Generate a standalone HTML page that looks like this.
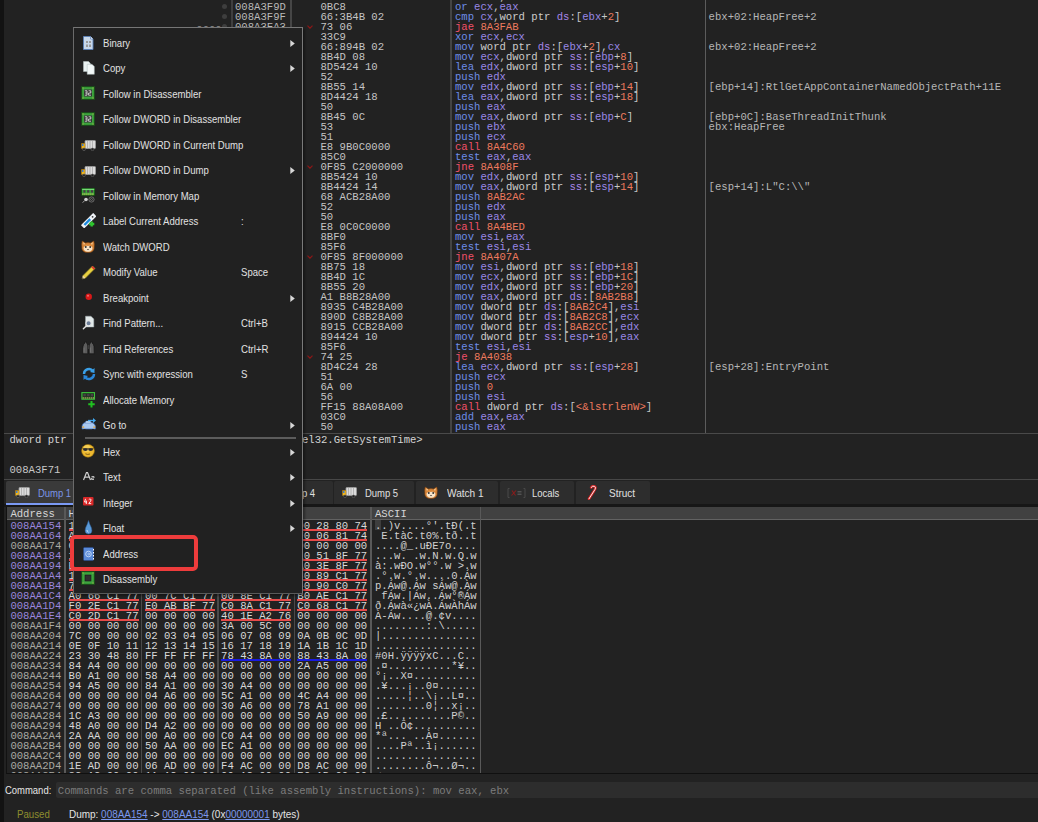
<!DOCTYPE html>
<html><head><meta charset="utf-8"><style>
html,body{margin:0;padding:0;}
body{width:1038px;height:822px;overflow:hidden;background:#222222;position:relative;}
div,svg{position:absolute;}
.m{font-family:"Liberation Mono",monospace;font-size:10.6px;line-height:10px;white-space:pre;height:10px;}
.s{font-family:"Liberation Sans",sans-serif;font-size:11px;line-height:11px;white-space:pre;transform-origin:0 0;}
</style></head><body>
<div style="left:0px;top:0px;width:4px;height:822px;background:#121212;"></div>
<div style="left:230.8px;top:0px;width:1.8px;height:433px;background:#3f3f3f;"></div>
<div style="left:290px;top:0px;width:2px;height:433px;background:#464646;"></div>
<div style="left:450px;top:0px;width:2px;height:433px;background:#444444;"></div>
<div style="left:704.8px;top:0px;width:1.5px;height:433px;background:#5c5c5c;"></div>
<div style="left:4px;top:433px;width:1034px;height:1px;background:#4a4a4a;"></div>
<div style="left:4px;top:0;width:1034px;height:433px;overflow:hidden">
<div class="m" style="left:451px;top:-7.83px"><span style="color:#6d8de8">shl</span> <span style="color:#9a88e6">ecx</span><span style="color:#c8c8c8">,</span><span style="color:#9a88e6">eax</span></div>
<div style="left:217.6px;top:3.8px;width:5.4px;height:5.4px;border-radius:50%;background:#3e3e3e"></div>
<div class="m" style="left:231px;top:2.17px"><span style="color:#b9b9b9">008A3F9D</span></div>
<div class="m" style="left:316.5px;top:2.17px"><span style="color:#c4c4c4">0BC8</span></div>
<div class="m" style="left:451px;top:2.17px"><span style="color:#6d8de8">or</span> <span style="color:#9a88e6">ecx</span><span style="color:#c8c8c8">,</span><span style="color:#9a88e6">eax</span></div>
<div style="left:217.6px;top:13.8px;width:5.4px;height:5.4px;border-radius:50%;background:#3e3e3e"></div>
<div class="m" style="left:231px;top:12.17px"><span style="color:#b9b9b9">008A3F9F</span></div>
<div class="m" style="left:316.5px;top:12.17px"><span style="color:#c4c4c4">66:3B4B 02</span></div>
<div class="m" style="left:451px;top:12.17px"><span style="color:#6d8de8">cmp</span> <span style="color:#9a88e6">cx</span><span style="color:#c8c8c8">,</span><span style="color:#cccccc">word</span> <span style="color:#cccccc">ptr</span> <span style="color:#a886e8">ds</span><span style="color:#c8c8c8">:</span><span style="color:#c8c8c8">[</span><span style="color:#9a88e6">ebx</span><span style="color:#c8c8c8">+</span><span style="color:#ee7a5e">2</span><span style="color:#c8c8c8">]</span></div>
<div class="m" style="left:704.6px;top:12.17px"><span style="color:#b6b6b6">ebx+02:HeapFree+2</span></div>
<div style="left:217.6px;top:23.8px;width:5.4px;height:5.4px;border-radius:50%;background:#3e3e3e"></div>
<div class="m" style="left:231px;top:22.17px"><span style="color:#b9b9b9">008A3FA3</span></div>
<div class="m" style="left:316.5px;top:22.17px"><span style="color:#c4c4c4">73 06</span></div>
<div class="m" style="left:451px;top:22.17px"><span style="color:#f0506a">jae</span> <span style="color:#ee7a5e">8A3FAB</span></div>
<svg style="position:absolute;left:302.5px;top:24.7px" width="6" height="4"><path d="M0.5 0.6 L3 3.2 L5.5 0.6" stroke="#8c1616" stroke-width="1.2" fill="none"/></svg>
<div style="left:217.6px;top:33.8px;width:5.4px;height:5.4px;border-radius:50%;background:#3e3e3e"></div>
<div class="m" style="left:231px;top:32.17px"><span style="color:#b9b9b9">008A3FA5</span></div>
<div class="m" style="left:316.5px;top:32.17px"><span style="color:#c4c4c4">33C9</span></div>
<div class="m" style="left:451px;top:32.17px"><span style="color:#6d8de8">xor</span> <span style="color:#9a88e6">ecx</span><span style="color:#c8c8c8">,</span><span style="color:#9a88e6">ecx</span></div>
<div class="m" style="left:316.5px;top:42.17px"><span style="color:#c4c4c4">66:894B 02</span></div>
<div class="m" style="left:451px;top:42.17px"><span style="color:#6d8de8">mov</span> <span style="color:#cccccc">word</span> <span style="color:#cccccc">ptr</span> <span style="color:#a886e8">ds</span><span style="color:#c8c8c8">:</span><span style="color:#c8c8c8">[</span><span style="color:#9a88e6">ebx</span><span style="color:#c8c8c8">+</span><span style="color:#ee7a5e">2</span><span style="color:#c8c8c8">]</span><span style="color:#c8c8c8">,</span><span style="color:#9a88e6">cx</span></div>
<div class="m" style="left:704.6px;top:42.17px"><span style="color:#b6b6b6">ebx+02:HeapFree+2</span></div>
<div class="m" style="left:316.5px;top:52.17px"><span style="color:#c4c4c4">8B4D 08</span></div>
<div class="m" style="left:451px;top:52.17px"><span style="color:#6d8de8">mov</span> <span style="color:#9a88e6">ecx</span><span style="color:#c8c8c8">,</span><span style="color:#cccccc">dword</span> <span style="color:#cccccc">ptr</span> <span style="color:#a886e8">ss</span><span style="color:#c8c8c8">:</span><span style="color:#c8c8c8">[</span><span style="color:#9a88e6">ebp</span><span style="color:#c8c8c8">+</span><span style="color:#ee7a5e">8</span><span style="color:#c8c8c8">]</span></div>
<div class="m" style="left:316.5px;top:62.17px"><span style="color:#c4c4c4">8D5424 10</span></div>
<div class="m" style="left:451px;top:62.17px"><span style="color:#6d8de8">lea</span> <span style="color:#9a88e6">edx</span><span style="color:#c8c8c8">,</span><span style="color:#cccccc">dword</span> <span style="color:#cccccc">ptr</span> <span style="color:#a886e8">ss</span><span style="color:#c8c8c8">:</span><span style="color:#c8c8c8">[</span><span style="color:#9a88e6">esp</span><span style="color:#c8c8c8">+</span><span style="color:#ee7a5e">10</span><span style="color:#c8c8c8">]</span></div>
<div class="m" style="left:316.5px;top:72.17px"><span style="color:#c4c4c4">52</span></div>
<div class="m" style="left:451px;top:72.17px"><span style="color:#6d8de8">push</span> <span style="color:#9a88e6">edx</span></div>
<div class="m" style="left:316.5px;top:82.17px"><span style="color:#c4c4c4">8B55 14</span></div>
<div class="m" style="left:451px;top:82.17px"><span style="color:#6d8de8">mov</span> <span style="color:#9a88e6">edx</span><span style="color:#c8c8c8">,</span><span style="color:#cccccc">dword</span> <span style="color:#cccccc">ptr</span> <span style="color:#a886e8">ss</span><span style="color:#c8c8c8">:</span><span style="color:#c8c8c8">[</span><span style="color:#9a88e6">ebp</span><span style="color:#c8c8c8">+</span><span style="color:#ee7a5e">14</span><span style="color:#c8c8c8">]</span></div>
<div class="m" style="left:704.6px;top:82.17px"><span style="color:#b6b6b6">[ebp+14]:RtlGetAppContainerNamedObjectPath+11E</span></div>
<div class="m" style="left:316.5px;top:92.17px"><span style="color:#c4c4c4">8D4424 18</span></div>
<div class="m" style="left:451px;top:92.17px"><span style="color:#6d8de8">lea</span> <span style="color:#9a88e6">eax</span><span style="color:#c8c8c8">,</span><span style="color:#cccccc">dword</span> <span style="color:#cccccc">ptr</span> <span style="color:#a886e8">ss</span><span style="color:#c8c8c8">:</span><span style="color:#c8c8c8">[</span><span style="color:#9a88e6">esp</span><span style="color:#c8c8c8">+</span><span style="color:#ee7a5e">18</span><span style="color:#c8c8c8">]</span></div>
<div class="m" style="left:316.5px;top:102.17px"><span style="color:#c4c4c4">50</span></div>
<div class="m" style="left:451px;top:102.17px"><span style="color:#6d8de8">push</span> <span style="color:#9a88e6">eax</span></div>
<div class="m" style="left:316.5px;top:112.17px"><span style="color:#c4c4c4">8B45 0C</span></div>
<div class="m" style="left:451px;top:112.17px"><span style="color:#6d8de8">mov</span> <span style="color:#9a88e6">eax</span><span style="color:#c8c8c8">,</span><span style="color:#cccccc">dword</span> <span style="color:#cccccc">ptr</span> <span style="color:#a886e8">ss</span><span style="color:#c8c8c8">:</span><span style="color:#c8c8c8">[</span><span style="color:#9a88e6">ebp</span><span style="color:#c8c8c8">+</span><span style="color:#ee7a5e">C</span><span style="color:#c8c8c8">]</span></div>
<div class="m" style="left:704.6px;top:112.17px"><span style="color:#b6b6b6">[ebp+0C]:BaseThreadInitThunk</span></div>
<div class="m" style="left:316.5px;top:122.17px"><span style="color:#c4c4c4">53</span></div>
<div class="m" style="left:451px;top:122.17px"><span style="color:#6d8de8">push</span> <span style="color:#9a88e6">ebx</span></div>
<div class="m" style="left:704.6px;top:122.17px"><span style="color:#b6b6b6">ebx:HeapFree</span></div>
<div class="m" style="left:316.5px;top:132.17px"><span style="color:#c4c4c4">51</span></div>
<div class="m" style="left:451px;top:132.17px"><span style="color:#6d8de8">push</span> <span style="color:#9a88e6">ecx</span></div>
<div class="m" style="left:316.5px;top:142.17px"><span style="color:#c4c4c4">E8 9B0C0000</span></div>
<div class="m" style="left:451px;top:142.17px"><span style="color:#f0506a">call</span> <span style="color:#ee7a5e">8A4C60</span></div>
<div class="m" style="left:316.5px;top:152.17px"><span style="color:#c4c4c4">85C0</span></div>
<div class="m" style="left:451px;top:152.17px"><span style="color:#6d8de8">test</span> <span style="color:#9a88e6">eax</span><span style="color:#c8c8c8">,</span><span style="color:#9a88e6">eax</span></div>
<div class="m" style="left:316.5px;top:162.17px"><span style="color:#c4c4c4">0F85 C2000000</span></div>
<div class="m" style="left:451px;top:162.17px"><span style="color:#f0506a">jne</span> <span style="color:#ee7a5e">8A408F</span></div>
<svg style="position:absolute;left:302.5px;top:164.7px" width="6" height="4"><path d="M0.5 0.6 L3 3.2 L5.5 0.6" stroke="#8c1616" stroke-width="1.2" fill="none"/></svg>
<div class="m" style="left:316.5px;top:172.17px"><span style="color:#c4c4c4">8B5424 10</span></div>
<div class="m" style="left:451px;top:172.17px"><span style="color:#6d8de8">mov</span> <span style="color:#9a88e6">edx</span><span style="color:#c8c8c8">,</span><span style="color:#cccccc">dword</span> <span style="color:#cccccc">ptr</span> <span style="color:#a886e8">ss</span><span style="color:#c8c8c8">:</span><span style="color:#c8c8c8">[</span><span style="color:#9a88e6">esp</span><span style="color:#c8c8c8">+</span><span style="color:#ee7a5e">10</span><span style="color:#c8c8c8">]</span></div>
<div class="m" style="left:316.5px;top:182.17px"><span style="color:#c4c4c4">8B4424 14</span></div>
<div class="m" style="left:451px;top:182.17px"><span style="color:#6d8de8">mov</span> <span style="color:#9a88e6">eax</span><span style="color:#c8c8c8">,</span><span style="color:#cccccc">dword</span> <span style="color:#cccccc">ptr</span> <span style="color:#a886e8">ss</span><span style="color:#c8c8c8">:</span><span style="color:#c8c8c8">[</span><span style="color:#9a88e6">esp</span><span style="color:#c8c8c8">+</span><span style="color:#ee7a5e">14</span><span style="color:#c8c8c8">]</span></div>
<div class="m" style="left:704.6px;top:182.17px"><span style="color:#b6b6b6">[esp+14]:L"C:\\"</span></div>
<div class="m" style="left:316.5px;top:192.17px"><span style="color:#c4c4c4">68 ACB28A00</span></div>
<div class="m" style="left:451px;top:192.17px"><span style="color:#6d8de8">push</span> <span style="color:#ee7a5e">8AB2AC</span></div>
<div class="m" style="left:316.5px;top:202.17px"><span style="color:#c4c4c4">52</span></div>
<div class="m" style="left:451px;top:202.17px"><span style="color:#6d8de8">push</span> <span style="color:#9a88e6">edx</span></div>
<div class="m" style="left:316.5px;top:212.17px"><span style="color:#c4c4c4">50</span></div>
<div class="m" style="left:451px;top:212.17px"><span style="color:#6d8de8">push</span> <span style="color:#9a88e6">eax</span></div>
<div class="m" style="left:316.5px;top:222.17px"><span style="color:#c4c4c4">E8 0C0C0000</span></div>
<div class="m" style="left:451px;top:222.17px"><span style="color:#f0506a">call</span> <span style="color:#ee7a5e">8A4BED</span></div>
<div class="m" style="left:316.5px;top:232.17px"><span style="color:#c4c4c4">8BF0</span></div>
<div class="m" style="left:451px;top:232.17px"><span style="color:#6d8de8">mov</span> <span style="color:#9a88e6">esi</span><span style="color:#c8c8c8">,</span><span style="color:#9a88e6">eax</span></div>
<div class="m" style="left:316.5px;top:242.17px"><span style="color:#c4c4c4">85F6</span></div>
<div class="m" style="left:451px;top:242.17px"><span style="color:#6d8de8">test</span> <span style="color:#9a88e6">esi</span><span style="color:#c8c8c8">,</span><span style="color:#9a88e6">esi</span></div>
<div class="m" style="left:316.5px;top:252.17px"><span style="color:#c4c4c4">0F85 8F000000</span></div>
<div class="m" style="left:451px;top:252.17px"><span style="color:#f0506a">jne</span> <span style="color:#ee7a5e">8A407A</span></div>
<svg style="position:absolute;left:302.5px;top:254.7px" width="6" height="4"><path d="M0.5 0.6 L3 3.2 L5.5 0.6" stroke="#8c1616" stroke-width="1.2" fill="none"/></svg>
<div class="m" style="left:316.5px;top:262.17px"><span style="color:#c4c4c4">8B75 18</span></div>
<div class="m" style="left:451px;top:262.17px"><span style="color:#6d8de8">mov</span> <span style="color:#9a88e6">esi</span><span style="color:#c8c8c8">,</span><span style="color:#cccccc">dword</span> <span style="color:#cccccc">ptr</span> <span style="color:#a886e8">ss</span><span style="color:#c8c8c8">:</span><span style="color:#c8c8c8">[</span><span style="color:#9a88e6">ebp</span><span style="color:#c8c8c8">+</span><span style="color:#ee7a5e">18</span><span style="color:#c8c8c8">]</span></div>
<div class="m" style="left:316.5px;top:272.17px"><span style="color:#c4c4c4">8B4D 1C</span></div>
<div class="m" style="left:451px;top:272.17px"><span style="color:#6d8de8">mov</span> <span style="color:#9a88e6">ecx</span><span style="color:#c8c8c8">,</span><span style="color:#cccccc">dword</span> <span style="color:#cccccc">ptr</span> <span style="color:#a886e8">ss</span><span style="color:#c8c8c8">:</span><span style="color:#c8c8c8">[</span><span style="color:#9a88e6">ebp</span><span style="color:#c8c8c8">+</span><span style="color:#ee7a5e">1C</span><span style="color:#c8c8c8">]</span></div>
<div class="m" style="left:316.5px;top:282.17px"><span style="color:#c4c4c4">8B55 20</span></div>
<div class="m" style="left:451px;top:282.17px"><span style="color:#6d8de8">mov</span> <span style="color:#9a88e6">edx</span><span style="color:#c8c8c8">,</span><span style="color:#cccccc">dword</span> <span style="color:#cccccc">ptr</span> <span style="color:#a886e8">ss</span><span style="color:#c8c8c8">:</span><span style="color:#c8c8c8">[</span><span style="color:#9a88e6">ebp</span><span style="color:#c8c8c8">+</span><span style="color:#ee7a5e">20</span><span style="color:#c8c8c8">]</span></div>
<div class="m" style="left:316.5px;top:292.17px"><span style="color:#c4c4c4">A1 B8B28A00</span></div>
<div class="m" style="left:451px;top:292.17px"><span style="color:#6d8de8">mov</span> <span style="color:#9a88e6">eax</span><span style="color:#c8c8c8">,</span><span style="color:#cccccc">dword</span> <span style="color:#cccccc">ptr</span> <span style="color:#a886e8">ds</span><span style="color:#c8c8c8">:</span><span style="color:#c8c8c8">[</span><span style="color:#ee7a5e">8AB2B8</span><span style="color:#c8c8c8">]</span></div>
<div class="m" style="left:316.5px;top:302.17px"><span style="color:#c4c4c4">8935 C4B28A00</span></div>
<div class="m" style="left:451px;top:302.17px"><span style="color:#6d8de8">mov</span> <span style="color:#cccccc">dword</span> <span style="color:#cccccc">ptr</span> <span style="color:#a886e8">ds</span><span style="color:#c8c8c8">:</span><span style="color:#c8c8c8">[</span><span style="color:#ee7a5e">8AB2C4</span><span style="color:#c8c8c8">]</span><span style="color:#c8c8c8">,</span><span style="color:#9a88e6">esi</span></div>
<div class="m" style="left:316.5px;top:312.17px"><span style="color:#c4c4c4">890D C8B28A00</span></div>
<div class="m" style="left:451px;top:312.17px"><span style="color:#6d8de8">mov</span> <span style="color:#cccccc">dword</span> <span style="color:#cccccc">ptr</span> <span style="color:#a886e8">ds</span><span style="color:#c8c8c8">:</span><span style="color:#c8c8c8">[</span><span style="color:#ee7a5e">8AB2C8</span><span style="color:#c8c8c8">]</span><span style="color:#c8c8c8">,</span><span style="color:#9a88e6">ecx</span></div>
<div class="m" style="left:316.5px;top:322.17px"><span style="color:#c4c4c4">8915 CCB28A00</span></div>
<div class="m" style="left:451px;top:322.17px"><span style="color:#6d8de8">mov</span> <span style="color:#cccccc">dword</span> <span style="color:#cccccc">ptr</span> <span style="color:#a886e8">ds</span><span style="color:#c8c8c8">:</span><span style="color:#c8c8c8">[</span><span style="color:#ee7a5e">8AB2CC</span><span style="color:#c8c8c8">]</span><span style="color:#c8c8c8">,</span><span style="color:#9a88e6">edx</span></div>
<div class="m" style="left:316.5px;top:332.17px"><span style="color:#c4c4c4">894424 10</span></div>
<div class="m" style="left:451px;top:332.17px"><span style="color:#6d8de8">mov</span> <span style="color:#cccccc">dword</span> <span style="color:#cccccc">ptr</span> <span style="color:#a886e8">ss</span><span style="color:#c8c8c8">:</span><span style="color:#c8c8c8">[</span><span style="color:#9a88e6">esp</span><span style="color:#c8c8c8">+</span><span style="color:#ee7a5e">10</span><span style="color:#c8c8c8">]</span><span style="color:#c8c8c8">,</span><span style="color:#9a88e6">eax</span></div>
<div class="m" style="left:316.5px;top:342.17px"><span style="color:#c4c4c4">85F6</span></div>
<div class="m" style="left:451px;top:342.17px"><span style="color:#6d8de8">test</span> <span style="color:#9a88e6">esi</span><span style="color:#c8c8c8">,</span><span style="color:#9a88e6">esi</span></div>
<div class="m" style="left:316.5px;top:352.17px"><span style="color:#c4c4c4">74 25</span></div>
<div class="m" style="left:451px;top:352.17px"><span style="color:#f0506a">je</span> <span style="color:#ee7a5e">8A4038</span></div>
<svg style="position:absolute;left:302.5px;top:354.7px" width="6" height="4"><path d="M0.5 0.6 L3 3.2 L5.5 0.6" stroke="#8c1616" stroke-width="1.2" fill="none"/></svg>
<div class="m" style="left:316.5px;top:362.17px"><span style="color:#c4c4c4">8D4C24 28</span></div>
<div class="m" style="left:451px;top:362.17px"><span style="color:#6d8de8">lea</span> <span style="color:#9a88e6">ecx</span><span style="color:#c8c8c8">,</span><span style="color:#cccccc">dword</span> <span style="color:#cccccc">ptr</span> <span style="color:#a886e8">ss</span><span style="color:#c8c8c8">:</span><span style="color:#c8c8c8">[</span><span style="color:#9a88e6">esp</span><span style="color:#c8c8c8">+</span><span style="color:#ee7a5e">28</span><span style="color:#c8c8c8">]</span></div>
<div class="m" style="left:704.6px;top:362.17px"><span style="color:#b6b6b6">[esp+28]:EntryPoint</span></div>
<div class="m" style="left:316.5px;top:372.17px"><span style="color:#c4c4c4">51</span></div>
<div class="m" style="left:451px;top:372.17px"><span style="color:#6d8de8">push</span> <span style="color:#9a88e6">ecx</span></div>
<div class="m" style="left:316.5px;top:382.17px"><span style="color:#c4c4c4">6A 00</span></div>
<div class="m" style="left:451px;top:382.17px"><span style="color:#6d8de8">push</span> <span style="color:#ee7a5e">0</span></div>
<div class="m" style="left:316.5px;top:392.17px"><span style="color:#c4c4c4">56</span></div>
<div class="m" style="left:451px;top:392.17px"><span style="color:#6d8de8">push</span> <span style="color:#9a88e6">esi</span></div>
<div class="m" style="left:316.5px;top:402.17px"><span style="color:#c4c4c4">FF15 88A08A00</span></div>
<div class="m" style="left:451px;top:402.17px"><span style="color:#f0506a">call</span> <span style="color:#cccccc">dword</span> <span style="color:#cccccc">ptr</span> <span style="color:#a886e8">ds</span><span style="color:#c8c8c8">:</span><span style="color:#c8c8c8">[</span><span style="color:#ee7a5e">&lt;&amp;lstrlenW&gt;</span><span style="color:#c8c8c8">]</span></div>
<div class="m" style="left:316.5px;top:412.17px"><span style="color:#c4c4c4">03C0</span></div>
<div class="m" style="left:451px;top:412.17px"><span style="color:#6d8de8">add</span> <span style="color:#9a88e6">eax</span><span style="color:#c8c8c8">,</span><span style="color:#9a88e6">eax</span></div>
<div class="m" style="left:316.5px;top:422.17px"><span style="color:#c4c4c4">50</span></div>
<div class="m" style="left:451px;top:422.17px"><span style="color:#6d8de8">push</span> <span style="color:#9a88e6">eax</span></div>
<div class="m" style="left:192.3px;top:25.27px"><span style="color:#8c8c8c">0000</span></div>
</div>
<div class="m" style="left:9.5px;top:435.47px"><span style="color:#d4d4d4">dword ptr ds:[008AA154 &lt;&amp;GetSystemTime&gt;]=&lt;kernel32.GetSystemTime&gt;</span></div>
<div class="m" style="left:9.5px;top:465.37px"><span style="color:#c8c8c8">008A3F71</span></div>
<div style="left:4px;top:479px;width:1034px;height:1px;background:#474747;"></div>
<div style="left:6px;top:481px;width:78.5px;height:22.5px;background:#3a3a3a;border-radius:2px 2px 0 0"></div>
<div style="left:86.5px;top:481px;width:80.0px;height:22.5px;background:#2d2d2d;border-radius:2px 2px 0 0"></div>
<div style="left:168.5px;top:481px;width:80.0px;height:22.5px;background:#2d2d2d;border-radius:2px 2px 0 0"></div>
<div style="left:250.5px;top:481px;width:82.0px;height:22.5px;background:#2d2d2d;border-radius:2px 2px 0 0"></div>
<div style="left:334px;top:481px;width:79.5px;height:22.5px;background:#2d2d2d;border-radius:2px 2px 0 0"></div>
<div style="left:415.5px;top:481px;width:82.5px;height:22.5px;background:#2d2d2d;border-radius:2px 2px 0 0"></div>
<div style="left:500px;top:481px;width:74px;height:22.5px;background:#2d2d2d;border-radius:2px 2px 0 0"></div>
<div style="left:576px;top:481px;width:74px;height:22.5px;background:#2d2d2d;border-radius:2px 2px 0 0"></div>
<div style="left:4px;top:503.5px;width:1034px;height:3.5px;background:#171717;"></div>
<div style="left:6px;top:503px;width:78.5px;height:2px;background:#7b9af5;"></div>
<div class="s" style="left:37.7px;top:487.80px;color:#7b95e8;transform:scaleX(0.86);">Dump 1</div>
<div class="s" style="left:118.0px;top:487.80px;color:#e0e0e0;transform:scaleX(0.86);">Dump 2</div>
<div class="s" style="left:200.0px;top:487.80px;color:#e0e0e0;transform:scaleX(0.86);">Dump 3</div>
<div class="s" style="left:282.0px;top:487.80px;color:#e0e0e0;transform:scaleX(0.86);">Dump 4</div>
<div class="s" style="left:365px;top:487.80px;color:#e0e0e0;transform:scaleX(0.86);">Dump 5</div>
<div class="s" style="left:447.4px;top:487.80px;color:#e0e0e0;transform:scaleX(0.915);">Watch 1</div>
<div class="s" style="left:532.4px;top:487.80px;color:#e0e0e0;transform:scaleX(0.86);">Locals</div>
<div class="s" style="left:608.6px;top:487.80px;color:#e0e0e0;transform:scaleX(0.91);">Struct</div>
<svg style="left:14.5px;top:486.5px" width="15" height="11" viewBox="0 0 15 11"><rect x="4" y="0.5" width="10.5" height="8" rx="0.8" fill="#dcdcdc" stroke="#9a9a9a" stroke-width="0.8"/><path d="M6.5 1v7M9 1v7M11.5 1v7" stroke="#a8a8a8" stroke-width="0.8"/><path d="M0.5 3.5h3.5v5h-3.5z" fill="#f0b820" stroke="#b07a10" stroke-width="0.6"/><rect x="1" y="4" width="1.5" height="2" fill="#3a7ad0"/><circle cx="3" cy="9.3" r="1.4" fill="#222" stroke="#777" stroke-width="0.5"/><circle cx="11.5" cy="9.3" r="1.4" fill="#222" stroke="#777" stroke-width="0.5"/></svg>
<svg style="left:342px;top:486.5px" width="15" height="11" viewBox="0 0 15 11"><rect x="4" y="0.5" width="10.5" height="8" rx="0.8" fill="#dcdcdc" stroke="#9a9a9a" stroke-width="0.8"/><path d="M6.5 1v7M9 1v7M11.5 1v7" stroke="#a8a8a8" stroke-width="0.8"/><path d="M0.5 3.5h3.5v5h-3.5z" fill="#f0b820" stroke="#b07a10" stroke-width="0.6"/><rect x="1" y="4" width="1.5" height="2" fill="#3a7ad0"/><circle cx="3" cy="9.3" r="1.4" fill="#222" stroke="#777" stroke-width="0.5"/><circle cx="11.5" cy="9.3" r="1.4" fill="#222" stroke="#777" stroke-width="0.5"/></svg>
<svg style="left:423.5px;top:486px" width="14" height="13" viewBox="0 0 14 13"><path d="M1.2 1 L4.6 3 Q7 2.2 9.4 3 L12.8 1 Q13.6 4 13.2 6.5 Q13.8 12.6 7 12.6 Q0.2 12.6 0.8 6.5 Q0.4 4 1.2 1Z" fill="#d8883c" stroke="#7a4010" stroke-width="0.6"/><path d="M2 2.2 L4 3.6 L3 5z M12 2.2 L10 3.6 L11 5z" fill="#f4d0a0"/><path d="M2.6 7.5 Q4 5 7 6 Q10 5 11.4 7.5 Q11.8 11.6 7 11.8 Q2.2 11.6 2.6 7.5Z" fill="#f8e4c8"/><circle cx="4.8" cy="7" r="0.9" fill="#2a2a2a"/><circle cx="9.2" cy="7" r="0.9" fill="#2a2a2a"/><path d="M6 9 h2 l-1 1.2z" fill="#2a2a2a"/></svg>
<svg style="left:507px;top:488px" width="19" height="10" viewBox="0 0 19 10"><path d="M2.5 0.5h-1.5v9h1.5M16.5 0.5h1.5v9h-1.5" stroke="#4a4a4a" stroke-width="1" fill="none"/><path d="M5 2.5 L8.5 7.5 M9 2.5 L4.5 7.5" stroke="#8a1c1c" stroke-width="1.1"/><path d="M10.5 3.8h4M10.5 6.2h4" stroke="#6a6a6a" stroke-width="0.9"/></svg>
<svg style="left:586.5px;top:484.5px" width="13" height="15" viewBox="0 0 13 15"><path d="M2 13.8 L7 6 Q9.6 2.6 7.6 1.4 Q5.6 0.4 4.2 2.4" stroke="#d42020" stroke-width="2.6" fill="none" stroke-linecap="round"/><path d="M2 13.8 L7 6 Q9.6 2.6 7.6 1.4 Q5.6 0.4 4.2 2.4" stroke="#f4f0f0" stroke-width="1.0" fill="none" stroke-linecap="round"/></svg>
<div style="left:7px;top:507px;width:1031px;height:11.5px;background:#414141;"></div>
<div style="left:7px;top:518.5px;width:1031px;height:1.5px;background:#626262;"></div>
<div style="left:64px;top:507px;width:1.5px;height:266px;background:#595959;"></div>
<div style="left:370px;top:507px;width:1.8px;height:266px;background:#595959;"></div>
<div style="left:479.5px;top:507px;width:1.5px;height:266px;background:#595959;"></div>
<div style="left:140.8px;top:520px;width:1.2px;height:253px;background:#4a4a4a;"></div>
<div style="left:217.4px;top:520px;width:1.2px;height:253px;background:#4a4a4a;"></div>
<div style="left:293.9px;top:520px;width:1.2px;height:253px;background:#4a4a4a;"></div>
<div class="m" style="left:10.4px;top:509.07px"><span style="color:#d6d6d6">Address</span></div>
<div class="m" style="left:68.5px;top:509.07px"><span style="color:#d6d6d6">Hex</span></div>
<div class="m" style="left:375px;top:509.07px"><span style="color:#d6d6d6">ASCII</span></div>
<div style="left:6px;top:772.5px;width:1032px;height:1px;background:#101010;"></div>
<div style="left:6px;top:507px;width:1px;height:266px;background:#121212;"></div>
<div style="left:7px;top:520px;width:1031px;height:253px;overflow:hidden">
<div class="m" style="left:3.4000000000000004px;top:0.97px"><span style="color:#9a86dc">008AA154</span></div>
<div class="m" style="left:61.599999999999994px;top:0.97px"><span style="color:#d8d8d8">10 90 29 76</span></div>
<div style="left:61.599999999999994px;top:8.6px;width:70px;height:2.2px;background:#e84a4a"></div>
<div class="m" style="left:137.9px;top:0.97px"><span style="color:#d8d8d8">00 00 00 00</span></div>
<div style="left:137.9px;top:8.6px;width:70px;height:2.2px;background:#e84a4a"></div>
<div class="m" style="left:214.1px;top:0.97px"><span style="color:#d8d8d8">B0 27 80 74</span></div>
<div style="left:214.1px;top:8.6px;width:70px;height:2.2px;background:#e84a4a"></div>
<div class="m" style="left:290.3px;top:0.97px"><span style="color:#d8d8d8">D0 28 80 74</span></div>
<div style="left:290.3px;top:8.6px;width:70px;height:2.2px;background:#e84a4a"></div>
<div style="left:367.5px;top:0.2999999999999545px;width:6.5px;height:10px;background:#3d3d3d"></div>
<div class="m" style="left:368px;top:0.97px"><span style="color:#d0d0d0">..)v....°'.tÐ(.t</span></div>
<div class="m" style="left:3.4000000000000004px;top:10.97px"><span style="color:#9a86dc">008AA164</span></div>
<div class="m" style="left:61.599999999999994px;top:10.97px"><span style="color:#d8d8d8">A0 45 80 74</span></div>
<div style="left:61.599999999999994px;top:18.6px;width:70px;height:2.2px;background:#e84a4a"></div>
<div class="m" style="left:137.9px;top:10.97px"><span style="color:#d8d8d8">E0 43 80 74</span></div>
<div style="left:137.9px;top:18.6px;width:70px;height:2.2px;background:#e84a4a"></div>
<div class="m" style="left:214.1px;top:10.97px"><span style="color:#d8d8d8">30 25 80 74</span></div>
<div style="left:214.1px;top:18.6px;width:70px;height:2.2px;background:#e84a4a"></div>
<div class="m" style="left:290.3px;top:10.97px"><span style="color:#d8d8d8">F0 06 81 74</span></div>
<div style="left:290.3px;top:18.6px;width:70px;height:2.2px;background:#e84a4a"></div>
<div class="m" style="left:368px;top:10.97px"><span style="color:#d0d0d0"> E.tàC.t0%.tð..t</span></div>
<div class="m" style="left:3.4000000000000004px;top:20.97px"><span style="color:#a9a9a2">008AA174</span></div>
<div class="m" style="left:61.599999999999994px;top:20.97px"><span style="color:#d8d8d8">00 00 00 00</span></div>
<div class="m" style="left:137.9px;top:20.97px"><span style="color:#d8d8d8">40 5F 90 75</span></div>
<div style="left:137.9px;top:28.6px;width:70px;height:2.2px;background:#e84a4a"></div>
<div class="m" style="left:214.1px;top:20.97px"><span style="color:#d8d8d8">D0 45 37 6F</span></div>
<div style="left:214.1px;top:28.6px;width:70px;height:2.2px;background:#e84a4a"></div>
<div class="m" style="left:290.3px;top:20.97px"><span style="color:#d8d8d8">00 00 00 00</span></div>
<div class="m" style="left:368px;top:20.97px"><span style="color:#d0d0d0">....@_.uÐE7o....</span></div>
<div class="m" style="left:3.4000000000000004px;top:30.97px"><span style="color:#9a86dc">008AA184</span></div>
<div class="m" style="left:61.599999999999994px;top:30.97px"><span style="color:#d8d8d8">10 80 8F 77</span></div>
<div style="left:61.599999999999994px;top:38.6px;width:70px;height:2.2px;background:#e84a4a"></div>
<div class="m" style="left:137.9px;top:30.97px"><span style="color:#d8d8d8">90 A0 8F 77</span></div>
<div style="left:137.9px;top:38.6px;width:70px;height:2.2px;background:#e84a4a"></div>
<div class="m" style="left:214.1px;top:30.97px"><span style="color:#d8d8d8">10 4E 8F 77</span></div>
<div style="left:214.1px;top:38.6px;width:70px;height:2.2px;background:#e84a4a"></div>
<div class="m" style="left:290.3px;top:30.97px"><span style="color:#d8d8d8">10 51 8F 77</span></div>
<div style="left:290.3px;top:38.6px;width:70px;height:2.2px;background:#e84a4a"></div>
<div class="m" style="left:368px;top:30.97px"><span style="color:#d0d0d0">...w. .w.N.w.Q.w</span></div>
<div class="m" style="left:3.4000000000000004px;top:40.97px"><span style="color:#9a86dc">008AA194</span></div>
<div class="m" style="left:61.599999999999994px;top:40.97px"><span style="color:#d8d8d8">E0 3A 8F 77</span></div>
<div style="left:61.599999999999994px;top:48.6px;width:70px;height:2.2px;background:#e84a4a"></div>
<div class="m" style="left:137.9px;top:40.97px"><span style="color:#d8d8d8">D0 4F 8F 77</span></div>
<div style="left:137.9px;top:48.6px;width:70px;height:2.2px;background:#e84a4a"></div>
<div class="m" style="left:214.1px;top:40.97px"><span style="color:#d8d8d8">B0 B0 8F 77</span></div>
<div style="left:214.1px;top:48.6px;width:70px;height:2.2px;background:#e84a4a"></div>
<div class="m" style="left:290.3px;top:40.97px"><span style="color:#d8d8d8">A0 3E 8F 77</span></div>
<div style="left:290.3px;top:48.6px;width:70px;height:2.2px;background:#e84a4a"></div>
<div class="m" style="left:368px;top:40.97px"><span style="color:#d0d0d0">à:.wÐO.w°°.w &gt;.w</span></div>
<div class="m" style="left:3.4000000000000004px;top:50.97px"><span style="color:#9a86dc">008AA1A4</span></div>
<div class="m" style="left:61.599999999999994px;top:50.97px"><span style="color:#d8d8d8">10 B0 8F 77</span></div>
<div style="left:61.599999999999994px;top:58.6px;width:70px;height:2.2px;background:#e84a4a"></div>
<div class="m" style="left:137.9px;top:50.97px"><span style="color:#d8d8d8">90 B0 8F 77</span></div>
<div style="left:137.9px;top:58.6px;width:70px;height:2.2px;background:#e84a4a"></div>
<div class="m" style="left:214.1px;top:50.97px"><span style="color:#d8d8d8">00 00 00 00</span></div>
<div class="m" style="left:290.3px;top:50.97px"><span style="color:#d8d8d8">30 89 C1 77</span></div>
<div style="left:290.3px;top:58.6px;width:70px;height:2.2px;background:#e84a4a"></div>
<div class="m" style="left:368px;top:50.97px"><span style="color:#d0d0d0">.°.w.°.w....0.Áw</span></div>
<div class="m" style="left:3.4000000000000004px;top:60.97px"><span style="color:#9a86dc">008AA1B4</span></div>
<div class="m" style="left:61.599999999999994px;top:60.97px"><span style="color:#d8d8d8">70 8A C1 77</span></div>
<div style="left:61.599999999999994px;top:68.6px;width:70px;height:2.2px;background:#e84a4a"></div>
<div class="m" style="left:137.9px;top:60.97px"><span style="color:#d8d8d8">40 8E C1 77</span></div>
<div style="left:137.9px;top:68.6px;width:70px;height:2.2px;background:#e84a4a"></div>
<div class="m" style="left:214.1px;top:60.97px"><span style="color:#d8d8d8">A0 73 C1 77</span></div>
<div style="left:214.1px;top:68.6px;width:70px;height:2.2px;background:#e84a4a"></div>
<div class="m" style="left:290.3px;top:60.97px"><span style="color:#d8d8d8">40 90 C0 77</span></div>
<div style="left:290.3px;top:68.6px;width:70px;height:2.2px;background:#e84a4a"></div>
<div class="m" style="left:368px;top:60.97px"><span style="color:#d0d0d0">p.Áw@.Áw sÁw@.Àw</span></div>
<div class="m" style="left:3.4000000000000004px;top:70.97px"><span style="color:#9a86dc">008AA1C4</span></div>
<div class="m" style="left:61.599999999999994px;top:70.97px"><span style="color:#d8d8d8">A0 66 C1 77</span></div>
<div style="left:61.599999999999994px;top:78.6px;width:70px;height:2.2px;background:#e84a4a"></div>
<div class="m" style="left:137.9px;top:70.97px"><span style="color:#d8d8d8">00 7C C1 77</span></div>
<div style="left:137.9px;top:78.6px;width:70px;height:2.2px;background:#e84a4a"></div>
<div class="m" style="left:214.1px;top:70.97px"><span style="color:#d8d8d8">00 8E C1 77</span></div>
<div style="left:214.1px;top:78.6px;width:70px;height:2.2px;background:#e84a4a"></div>
<div class="m" style="left:290.3px;top:70.97px"><span style="color:#d8d8d8">B0 AE C1 77</span></div>
<div style="left:290.3px;top:78.6px;width:70px;height:2.2px;background:#e84a4a"></div>
<div class="m" style="left:368px;top:70.97px"><span style="color:#d0d0d0"> fÁw.|Áw..Áw°®Áw</span></div>
<div class="m" style="left:3.4000000000000004px;top:80.97px"><span style="color:#9a86dc">008AA1D4</span></div>
<div class="m" style="left:61.599999999999994px;top:80.97px"><span style="color:#d8d8d8">F0 2E C1 77</span></div>
<div style="left:61.599999999999994px;top:88.6px;width:70px;height:2.2px;background:#e84a4a"></div>
<div class="m" style="left:137.9px;top:80.97px"><span style="color:#d8d8d8">E0 AB BF 77</span></div>
<div style="left:137.9px;top:88.6px;width:70px;height:2.2px;background:#e84a4a"></div>
<div class="m" style="left:214.1px;top:80.97px"><span style="color:#d8d8d8">C0 8A C1 77</span></div>
<div style="left:214.1px;top:88.6px;width:70px;height:2.2px;background:#e84a4a"></div>
<div class="m" style="left:290.3px;top:80.97px"><span style="color:#d8d8d8">C0 68 C1 77</span></div>
<div style="left:290.3px;top:88.6px;width:70px;height:2.2px;background:#e84a4a"></div>
<div class="m" style="left:368px;top:80.97px"><span style="color:#d0d0d0">ð.Áwà«¿wÀ.ÁwÀhÁw</span></div>
<div class="m" style="left:3.4000000000000004px;top:90.97px"><span style="color:#9a86dc">008AA1E4</span></div>
<div class="m" style="left:61.599999999999994px;top:90.97px"><span style="color:#d8d8d8">C0 2D C1 77</span></div>
<div style="left:61.599999999999994px;top:98.6px;width:70px;height:2.2px;background:#e84a4a"></div>
<div class="m" style="left:137.9px;top:90.97px"><span style="color:#d8d8d8">00 00 00 00</span></div>
<div class="m" style="left:214.1px;top:90.97px"><span style="color:#d8d8d8">40 1E A2 76</span></div>
<div style="left:214.1px;top:98.6px;width:70px;height:2.2px;background:#e84a4a"></div>
<div class="m" style="left:290.3px;top:90.97px"><span style="color:#d8d8d8">00 00 00 00</span></div>
<div class="m" style="left:368px;top:90.97px"><span style="color:#d0d0d0">À-Áw....@.¢v....</span></div>
<div class="m" style="left:3.4000000000000004px;top:100.97px"><span style="color:#a9a9a2">008AA1F4</span></div>
<div class="m" style="left:61.599999999999994px;top:100.97px"><span style="color:#d8d8d8">00 00 00 00</span></div>
<div class="m" style="left:137.9px;top:100.97px"><span style="color:#d8d8d8">00 00 00 00</span></div>
<div class="m" style="left:214.1px;top:100.97px"><span style="color:#d8d8d8">3A 00 5C 00</span></div>
<div class="m" style="left:290.3px;top:100.97px"><span style="color:#d8d8d8">00 00 00 00</span></div>
<div class="m" style="left:368px;top:100.97px"><span style="color:#d0d0d0">........:.\.....</span></div>
<div class="m" style="left:3.4000000000000004px;top:110.97px"><span style="color:#a9a9a2">008AA204</span></div>
<div class="m" style="left:61.599999999999994px;top:110.97px"><span style="color:#d8d8d8">7C 00 00 00</span></div>
<div class="m" style="left:137.9px;top:110.97px"><span style="color:#d8d8d8">02 03 04 05</span></div>
<div class="m" style="left:214.1px;top:110.97px"><span style="color:#d8d8d8">06 07 08 09</span></div>
<div class="m" style="left:290.3px;top:110.97px"><span style="color:#d8d8d8">0A 0B 0C 0D</span></div>
<div class="m" style="left:368px;top:110.97px"><span style="color:#d0d0d0">|...............</span></div>
<div class="m" style="left:3.4000000000000004px;top:120.97px"><span style="color:#a9a9a2">008AA214</span></div>
<div class="m" style="left:61.599999999999994px;top:120.97px"><span style="color:#d8d8d8">0E 0F 10 11</span></div>
<div class="m" style="left:137.9px;top:120.97px"><span style="color:#d8d8d8">12 13 14 15</span></div>
<div class="m" style="left:214.1px;top:120.97px"><span style="color:#d8d8d8">16 17 18 19</span></div>
<div class="m" style="left:290.3px;top:120.97px"><span style="color:#d8d8d8">1A 1B 1C 1D</span></div>
<div class="m" style="left:368px;top:120.97px"><span style="color:#d0d0d0">................</span></div>
<div class="m" style="left:3.4000000000000004px;top:130.97px"><span style="color:#a9a9a2">008AA224</span></div>
<div class="m" style="left:61.599999999999994px;top:130.97px"><span style="color:#d8d8d8">23 30 48 80</span></div>
<div class="m" style="left:137.9px;top:130.97px"><span style="color:#d8d8d8">FF FF FF FF</span></div>
<div class="m" style="left:214.1px;top:130.97px"><span style="color:#d8d8d8">78 43 8A 00</span></div>
<div style="left:214.1px;top:138.6px;width:70px;height:2.2px;background:#1a1ae0"></div>
<div class="m" style="left:290.3px;top:130.97px"><span style="color:#d8d8d8">88 43 8A 00</span></div>
<div style="left:290.3px;top:138.6px;width:70px;height:2.2px;background:#1a1ae0"></div>
<div class="m" style="left:368px;top:130.97px"><span style="color:#d0d0d0">#0H.ÿÿÿÿxC...C..</span></div>
<div class="m" style="left:3.4000000000000004px;top:140.97px"><span style="color:#a9a9a2">008AA234</span></div>
<div class="m" style="left:61.599999999999994px;top:140.97px"><span style="color:#d8d8d8">84 A4 00 00</span></div>
<div class="m" style="left:137.9px;top:140.97px"><span style="color:#d8d8d8">00 00 00 00</span></div>
<div class="m" style="left:214.1px;top:140.97px"><span style="color:#d8d8d8">00 00 00 00</span></div>
<div class="m" style="left:290.3px;top:140.97px"><span style="color:#d8d8d8">2A A5 00 00</span></div>
<div class="m" style="left:368px;top:140.97px"><span style="color:#d0d0d0">.¤..........*¥..</span></div>
<div class="m" style="left:3.4000000000000004px;top:150.97px"><span style="color:#a9a9a2">008AA244</span></div>
<div class="m" style="left:61.599999999999994px;top:150.97px"><span style="color:#d8d8d8">B0 A1 00 00</span></div>
<div class="m" style="left:137.9px;top:150.97px"><span style="color:#d8d8d8">58 A4 00 00</span></div>
<div class="m" style="left:214.1px;top:150.97px"><span style="color:#d8d8d8">00 00 00 00</span></div>
<div class="m" style="left:290.3px;top:150.97px"><span style="color:#d8d8d8">00 00 00 00</span></div>
<div class="m" style="left:368px;top:150.97px"><span style="color:#d0d0d0">°¡..X¤..........</span></div>
<div class="m" style="left:3.4000000000000004px;top:160.97px"><span style="color:#a9a9a2">008AA254</span></div>
<div class="m" style="left:61.599999999999994px;top:160.97px"><span style="color:#d8d8d8">94 A5 00 00</span></div>
<div class="m" style="left:137.9px;top:160.97px"><span style="color:#d8d8d8">84 A1 00 00</span></div>
<div class="m" style="left:214.1px;top:160.97px"><span style="color:#d8d8d8">30 A4 00 00</span></div>
<div class="m" style="left:290.3px;top:160.97px"><span style="color:#d8d8d8">00 00 00 00</span></div>
<div class="m" style="left:368px;top:160.97px"><span style="color:#d0d0d0">.¥...¡..0¤......</span></div>
<div class="m" style="left:3.4000000000000004px;top:170.97px"><span style="color:#a9a9a2">008AA264</span></div>
<div class="m" style="left:61.599999999999994px;top:170.97px"><span style="color:#d8d8d8">00 00 00 00</span></div>
<div class="m" style="left:137.9px;top:170.97px"><span style="color:#d8d8d8">04 A6 00 00</span></div>
<div class="m" style="left:214.1px;top:170.97px"><span style="color:#d8d8d8">5C A1 00 00</span></div>
<div class="m" style="left:290.3px;top:170.97px"><span style="color:#d8d8d8">4C A4 00 00</span></div>
<div class="m" style="left:368px;top:170.97px"><span style="color:#d0d0d0">.....¦..\¡..L¤..</span></div>
<div class="m" style="left:3.4000000000000004px;top:180.97px"><span style="color:#a9a9a2">008AA274</span></div>
<div class="m" style="left:61.599999999999994px;top:180.97px"><span style="color:#d8d8d8">00 00 00 00</span></div>
<div class="m" style="left:137.9px;top:180.97px"><span style="color:#d8d8d8">00 00 00 00</span></div>
<div class="m" style="left:214.1px;top:180.97px"><span style="color:#d8d8d8">30 A6 00 00</span></div>
<div class="m" style="left:290.3px;top:180.97px"><span style="color:#d8d8d8">78 A1 00 00</span></div>
<div class="m" style="left:368px;top:180.97px"><span style="color:#d0d0d0">........0¦..x¡..</span></div>
<div class="m" style="left:3.4000000000000004px;top:190.97px"><span style="color:#a9a9a2">008AA284</span></div>
<div class="m" style="left:61.599999999999994px;top:190.97px"><span style="color:#d8d8d8">1C A3 00 00</span></div>
<div class="m" style="left:137.9px;top:190.97px"><span style="color:#d8d8d8">00 00 00 00</span></div>
<div class="m" style="left:214.1px;top:190.97px"><span style="color:#d8d8d8">00 00 00 00</span></div>
<div class="m" style="left:290.3px;top:190.97px"><span style="color:#d8d8d8">50 A9 00 00</span></div>
<div class="m" style="left:368px;top:190.97px"><span style="color:#d0d0d0">.£..........P©..</span></div>
<div class="m" style="left:3.4000000000000004px;top:200.97px"><span style="color:#a9a9a2">008AA294</span></div>
<div class="m" style="left:61.599999999999994px;top:200.97px"><span style="color:#d8d8d8">48 A0 00 00</span></div>
<div class="m" style="left:137.9px;top:200.97px"><span style="color:#d8d8d8">D4 A2 00 00</span></div>
<div class="m" style="left:214.1px;top:200.97px"><span style="color:#d8d8d8">00 00 00 00</span></div>
<div class="m" style="left:290.3px;top:200.97px"><span style="color:#d8d8d8">00 00 00 00</span></div>
<div class="m" style="left:368px;top:200.97px"><span style="color:#d0d0d0">H ..Ô¢..........</span></div>
<div class="m" style="left:3.4000000000000004px;top:210.97px"><span style="color:#a9a9a2">008AA2A4</span></div>
<div class="m" style="left:61.599999999999994px;top:210.97px"><span style="color:#d8d8d8">2A AA 00 00</span></div>
<div class="m" style="left:137.9px;top:210.97px"><span style="color:#d8d8d8">00 A0 00 00</span></div>
<div class="m" style="left:214.1px;top:210.97px"><span style="color:#d8d8d8">C0 A4 00 00</span></div>
<div class="m" style="left:290.3px;top:210.97px"><span style="color:#d8d8d8">00 00 00 00</span></div>
<div class="m" style="left:368px;top:210.97px"><span style="color:#d0d0d0">*ª... ..À¤......</span></div>
<div class="m" style="left:3.4000000000000004px;top:220.97px"><span style="color:#a9a9a2">008AA2B4</span></div>
<div class="m" style="left:61.599999999999994px;top:220.97px"><span style="color:#d8d8d8">00 00 00 00</span></div>
<div class="m" style="left:137.9px;top:220.97px"><span style="color:#d8d8d8">50 AA 00 00</span></div>
<div class="m" style="left:214.1px;top:220.97px"><span style="color:#d8d8d8">EC A1 00 00</span></div>
<div class="m" style="left:290.3px;top:220.97px"><span style="color:#d8d8d8">00 00 00 00</span></div>
<div class="m" style="left:368px;top:220.97px"><span style="color:#d0d0d0">....Pª..ì¡......</span></div>
<div class="m" style="left:3.4000000000000004px;top:230.97px"><span style="color:#a9a9a2">008AA2C4</span></div>
<div class="m" style="left:61.599999999999994px;top:230.97px"><span style="color:#d8d8d8">00 00 00 00</span></div>
<div class="m" style="left:137.9px;top:230.97px"><span style="color:#d8d8d8">00 00 00 00</span></div>
<div class="m" style="left:214.1px;top:230.97px"><span style="color:#d8d8d8">00 00 00 00</span></div>
<div class="m" style="left:290.3px;top:230.97px"><span style="color:#d8d8d8">00 00 00 00</span></div>
<div class="m" style="left:368px;top:230.97px"><span style="color:#d0d0d0">................</span></div>
<div class="m" style="left:3.4000000000000004px;top:240.97px"><span style="color:#a9a9a2">008AA2D4</span></div>
<div class="m" style="left:61.599999999999994px;top:240.97px"><span style="color:#d8d8d8">1E AD 00 00</span></div>
<div class="m" style="left:137.9px;top:240.97px"><span style="color:#d8d8d8">06 AD 00 00</span></div>
<div class="m" style="left:214.1px;top:240.97px"><span style="color:#d8d8d8">F4 AC 00 00</span></div>
<div class="m" style="left:290.3px;top:240.97px"><span style="color:#d8d8d8">D8 AC 00 00</span></div>
<div class="m" style="left:368px;top:240.97px"><span style="color:#d0d0d0">........ô¬..Ø¬..</span></div>
<div class="m" style="left:3.4000000000000004px;top:250.97px"><span style="color:#a9a9a2">008AA2E4</span></div>
<div class="m" style="left:61.599999999999994px;top:250.97px"><span style="color:#d8d8d8">3C AC 00 00</span></div>
<div class="m" style="left:137.9px;top:250.97px"><span style="color:#d8d8d8">1A AC 00 00</span></div>
<div class="m" style="left:214.1px;top:250.97px"><span style="color:#d8d8d8">00 AC 00 00</span></div>
<div class="m" style="left:290.3px;top:250.97px"><span style="color:#d8d8d8">E6 AB 00 00</span></div>
<div class="m" style="left:368px;top:250.97px"><span style="color:#d0d0d0">&lt;¬...¬...¬..æ«..</span></div>
</div>
<div class="s" style="left:4.8px;top:784.80px;color:#e6e6e6;transform:scaleX(0.86);">Command:</div>
<div style="left:55.5px;top:782px;width:983px;height:15.5px;background:#2d2d2d;border-radius:2px 0 0 2px"></div>
<div class="m" style="left:57.8px;top:786.47px"><span style="color:#7c7c7c">Commands are comma separated (like assembly instructions): mov eax, ebx</span></div>
<div class="s" style="left:17.0px;top:808.70px;color:#8e8e2e;transform:scaleX(0.88);">Paused</div>
<div class="s" style="left:68.8px;top:808.70px;color:#e4e4e4;transform:scaleX(0.905)">Dump: <u style="color:#7b98ee">008AA154</u> -&gt; <u style="color:#7b98ee">008AA154</u> (0x<u style="color:#7b98ee">00000001</u> bytes)</div>
<div style="left:73px;top:27px;width:230px;height:567px;background:#212121;box-sizing:border-box;border:1px solid #767676;border-right-color:#7a7a7a;border-bottom-color:#5a5a5a;border-left-color:#6a6a6a;box-shadow:2px 2px 2px rgba(0,0,0,0.35)"></div>
<div class="s" style="left:102.5px;top:37.95px;color:#e2e2e2;transform:scaleX(0.87);">Binary</div>
<svg style="left:290px;top:40.0px" width="5" height="7"><path d="M0.3 0 L4.8 3.5 L0.3 7 Z" fill="#d8d8d8"/></svg>
<svg style="left:83px;top:36px" width="11" height="14" viewBox="0 0 11 14"><path d="M0.5 0.5h7l2.5 2.5v10.5h-9.5z" fill="#c8d8ea" stroke="#5a80b8" stroke-width="0.9"/><path d="M7.5 0.5v2.5h2.5" fill="#fff" stroke="#5a80b8" stroke-width="0.7"/><path d="M3 5h2v2h-2zM6 5h2v2h-2zM3 8.5h2v2.5h-2zM6 8.5h2v2.5h-2z" fill="#9a9a9a"/></svg>
<div class="s" style="left:102.5px;top:63.43px;color:#e2e2e2;transform:scaleX(0.87);">Copy</div>
<svg style="left:290px;top:65.4px" width="5" height="7"><path d="M0.3 0 L4.8 3.5 L0.3 7 Z" fill="#d8d8d8"/></svg>
<svg style="left:82.6px;top:61.3px" width="12" height="14" viewBox="0 0 12 14"><path d="M0.5 0.5h5l1.8 1.8v8.2h-6.8z" fill="#eaf2f2" stroke="#b8c4c4" stroke-width="0.5"/><path d="M4.2 3.3h4.8l2.3 2.3v7.7h-7.1z" fill="#f2f8f8" stroke="#aab8b8" stroke-width="0.5"/></svg>
<div class="s" style="left:102.5px;top:88.91px;color:#e2e2e2;transform:scaleX(0.87);">Follow in Disassembler</div>
<svg style="left:81px;top:86px" width="14" height="14" viewBox="0 0 14 14"><rect x="0.5" y="0.5" width="13" height="13" fill="#2c8a2c" stroke="#1a4a1a" stroke-width="0.8"/><rect x="1.5" y="1.5" width="11" height="11" fill="#3fa33f"/><g fill="#c8c050"><rect x="1.5" y="1.5" width="1" height="1"/><rect x="11.5" y="1.5" width="1" height="1"/><rect x="1.5" y="11.5" width="1" height="1"/><rect x="11.5" y="11.5" width="1" height="1"/></g><rect x="3" y="3.5" width="8" height="7" fill="#353535"/><path d="M3.8 4.8h2.2v4.4h-2.2M4.2 7h1.8M7.6 4.8h2.2v2.2h-2.2v2.2h2.4" stroke="#e8e8e8" stroke-width="0.8" fill="none"/></svg>
<div class="s" style="left:102.5px;top:114.39px;color:#e2e2e2;transform:scaleX(0.87);">Follow DWORD in Disassembler</div>
<svg style="left:81px;top:111.5px" width="14" height="14" viewBox="0 0 14 14"><rect x="0.5" y="0.5" width="13" height="13" fill="#2c8a2c" stroke="#1a4a1a" stroke-width="0.8"/><rect x="1.5" y="1.5" width="11" height="11" fill="#3fa33f"/><g fill="#c8c050"><rect x="1.5" y="1.5" width="1" height="1"/><rect x="11.5" y="1.5" width="1" height="1"/><rect x="1.5" y="11.5" width="1" height="1"/><rect x="11.5" y="11.5" width="1" height="1"/></g><rect x="3" y="3.5" width="8" height="7" fill="#353535"/><path d="M3.8 4.8h2.2v4.4h-2.2M4.2 7h1.8M7.6 4.8h2.2v2.2h-2.2v2.2h2.4" stroke="#e8e8e8" stroke-width="0.8" fill="none"/></svg>
<div class="s" style="left:102.5px;top:139.87px;color:#e2e2e2;transform:scaleX(0.87);">Follow DWORD in Current Dump</div>
<svg style="left:81px;top:140px" width="15" height="11" viewBox="0 0 15 11"><rect x="4" y="0.5" width="10.5" height="8" rx="0.8" fill="#dcdcdc" stroke="#9a9a9a" stroke-width="0.8"/><path d="M6.5 1v7M9 1v7M11.5 1v7" stroke="#a8a8a8" stroke-width="0.8"/><path d="M0.5 3.5h3.5v5h-3.5z" fill="#f0b820" stroke="#b07a10" stroke-width="0.6"/><rect x="1" y="4" width="1.5" height="2" fill="#3a7ad0"/><circle cx="3" cy="9.3" r="1.4" fill="#222" stroke="#777" stroke-width="0.5"/><circle cx="11.5" cy="9.3" r="1.4" fill="#222" stroke="#777" stroke-width="0.5"/></svg>
<div class="s" style="left:102.5px;top:165.35px;color:#e2e2e2;transform:scaleX(0.87);">Follow DWORD in Dump</div>
<svg style="left:290px;top:167.4px" width="5" height="7"><path d="M0.3 0 L4.8 3.5 L0.3 7 Z" fill="#d8d8d8"/></svg>
<svg style="left:81px;top:165.5px" width="15" height="11" viewBox="0 0 15 11"><rect x="4" y="0.5" width="10.5" height="8" rx="0.8" fill="#dcdcdc" stroke="#9a9a9a" stroke-width="0.8"/><path d="M6.5 1v7M9 1v7M11.5 1v7" stroke="#a8a8a8" stroke-width="0.8"/><path d="M0.5 3.5h3.5v5h-3.5z" fill="#f0b820" stroke="#b07a10" stroke-width="0.6"/><rect x="1" y="4" width="1.5" height="2" fill="#3a7ad0"/><circle cx="3" cy="9.3" r="1.4" fill="#222" stroke="#777" stroke-width="0.5"/><circle cx="11.5" cy="9.3" r="1.4" fill="#222" stroke="#777" stroke-width="0.5"/></svg>
<div class="s" style="left:102.5px;top:190.83px;color:#e2e2e2;transform:scaleX(0.87);">Follow in Memory Map</div>
<svg style="left:81px;top:188px" width="15" height="15" viewBox="0 0 15 15"><rect x="0.7" y="0.3" width="13" height="7" fill="#3aa83a" stroke="#0c500c" stroke-width="0.7"/><rect x="1.2" y="0.8" width="12" height="1.2" fill="#78d878"/><rect x="2.3" y="2.2" width="2.2" height="2.4" fill="#4a3a48"/><rect x="6.1" y="2.2" width="2.2" height="2.4" fill="#4a3a48"/><rect x="9.9" y="2.2" width="2.2" height="2.4" fill="#4a3a48"/><path d="M1.9 5.2v2M3.9 5.2v2M5.9 5.2v2M7.9 5.2v2M9.9 5.2v2M11.9 5.2v2" stroke="#d8c060" stroke-width="0.8"/><circle cx="5" cy="11.5" r="1.8" fill="#d0d0d0"/><path d="M3.7 12.8 L1.5 14.5" stroke="#bbb" stroke-width="0.8"/><circle cx="10.5" cy="11.5" r="2.6" fill="none" stroke="#8a8a8a" stroke-width="0.7"/><circle cx="10.5" cy="11.5" r="1" fill="none" stroke="#8a8a8a" stroke-width="0.6"/></svg>
<div class="s" style="left:102.5px;top:216.31px;color:#e2e2e2;transform:scaleX(0.87);">Label Current Address</div>
<div class="s" style="left:241.2px;top:216.31px;color:#e2e2e2;transform:scaleX(0.87);">:</div>
<svg style="left:81px;top:213px" width="15" height="15" viewBox="0 0 15 15"><path d="M3.2 12.2 L12.2 3.2" stroke="#eef2f6" stroke-width="4.6" stroke-linecap="square"/><path d="M3.4 12 L9.2 6.2" stroke="#1a8ae0" stroke-width="2.4"/><circle cx="11.6" cy="3.8" r="0.9" fill="#3a3a3a"/><path d="M10.7 8.4v5.2M8.1 11h5.2" stroke="#2ec42e" stroke-width="2.4"/></svg>
<div class="s" style="left:102.5px;top:241.79px;color:#e2e2e2;transform:scaleX(0.87);">Watch DWORD</div>
<svg style="left:81px;top:240px" width="14" height="13" viewBox="0 0 14 13"><path d="M1.2 1 L4.6 3 Q7 2.2 9.4 3 L12.8 1 Q13.6 4 13.2 6.5 Q13.8 12.6 7 12.6 Q0.2 12.6 0.8 6.5 Q0.4 4 1.2 1Z" fill="#d8883c" stroke="#7a4010" stroke-width="0.6"/><path d="M2 2.2 L4 3.6 L3 5z M12 2.2 L10 3.6 L11 5z" fill="#f4d0a0"/><path d="M2.6 7.5 Q4 5 7 6 Q10 5 11.4 7.5 Q11.8 11.6 7 11.8 Q2.2 11.6 2.6 7.5Z" fill="#f8e4c8"/><circle cx="4.8" cy="7" r="0.9" fill="#2a2a2a"/><circle cx="9.2" cy="7" r="0.9" fill="#2a2a2a"/><path d="M6 9 h2 l-1 1.2z" fill="#2a2a2a"/></svg>
<div class="s" style="left:102.5px;top:267.27px;color:#e2e2e2;transform:scaleX(0.87);">Modify Value</div>
<div class="s" style="left:241.2px;top:267.27px;color:#e2e2e2;transform:scaleX(0.87);">Space</div>
<svg style="left:81px;top:264.5px" width="15" height="15" viewBox="0 0 15 15"><path d="M1 14 L2 10.5 L11.5 1 L14 3.5 L4.5 13 Z" fill="#e8d040" stroke="#8a7a20" stroke-width="0.6"/><path d="M11.5 1 L14 3.5 L12.8 4.7 L10.3 2.2 Z" fill="#e03030"/><path d="M1 14 L2 10.5 L4.5 13 Z" fill="#f0d8a8"/><path d="M1 14 l0.6 -1.8 l1.2 1.2z" fill="#333"/></svg>
<div class="s" style="left:102.5px;top:292.75px;color:#e2e2e2;transform:scaleX(0.87);">Breakpoint</div>
<svg style="left:290px;top:294.8px" width="5" height="7"><path d="M0.3 0 L4.8 3.5 L0.3 7 Z" fill="#d8d8d8"/></svg>
<svg style="left:84.5px;top:293px" width="7.5" height="7.5" viewBox="0 0 7.5 7.5"><circle cx="3.75" cy="3.75" r="3.2" fill="#d81818"/><circle cx="3" cy="2.8" r="1" fill="#f07070"/></svg>
<div class="s" style="left:102.5px;top:318.23px;color:#e2e2e2;transform:scaleX(0.87);">Find Pattern...</div>
<div class="s" style="left:241.2px;top:318.23px;color:#e2e2e2;transform:scaleX(0.87);">Ctrl+B</div>
<svg style="left:82px;top:315px" width="14" height="15" viewBox="0 0 14 15"><path d="M3.5 1.2h5.5l2.8 2.8v8h-8.3z" fill="#e2eaea" stroke="#9aa4a8" stroke-width="0.5"/><circle cx="6.6" cy="8.3" r="2.6" fill="#6c7e98" stroke="#e6e6e6" stroke-width="1.1"/><path d="M4.7 10.4 L1.4 13.7" stroke="#dedede" stroke-width="1.4" stroke-linecap="round"/></svg>
<div class="s" style="left:102.5px;top:343.71px;color:#e2e2e2;transform:scaleX(0.87);">Find References</div>
<div class="s" style="left:241.2px;top:343.71px;color:#e2e2e2;transform:scaleX(0.87);">Ctrl+R</div>
<svg style="left:82px;top:341px" width="13" height="14" viewBox="0 0 13 14"><path d="M1 5.5 Q1.5 2.5 3 2 L3 0.8 L4.5 0.8 L4.5 2 Q5.5 2.5 5.8 5 L5.8 12.8 L0.8 12.8 Z" fill="#5c5c5c" stroke="#141414" stroke-width="0.7"/><path d="M12 5.5 Q11.5 2.5 10 2 L10 0.8 L8.5 0.8 L8.5 2 Q7.5 2.5 7.2 5 L7.2 12.8 L12.2 12.8 Z" fill="#5c5c5c" stroke="#141414" stroke-width="0.7"/><rect x="5.8" y="4" width="1.4" height="4" fill="#3a3a3a"/><path d="M2 6.5v5M8.4 6.5v5" stroke="#7a7a7a" stroke-width="0.8"/></svg>
<div class="s" style="left:102.5px;top:369.19px;color:#e2e2e2;transform:scaleX(0.87);">Sync with expression</div>
<div class="s" style="left:241.2px;top:369.19px;color:#e2e2e2;transform:scaleX(0.87);">S</div>
<svg style="left:81.5px;top:366.5px" width="14" height="14" viewBox="0 0 14 14"><path d="M2 7 A5 5 0 0 1 11 4" fill="none" stroke="#3aa0e8" stroke-width="2.4"/><path d="M12.5 1 L12.5 6 L8 5 Z" fill="#3aa0e8"/><path d="M12 7 A5 5 0 0 1 3 10" fill="none" stroke="#2a86d8" stroke-width="2.4"/><path d="M1.5 13 L1.5 8 L6 9 Z" fill="#2a86d8"/></svg>
<div class="s" style="left:102.5px;top:394.67px;color:#e2e2e2;transform:scaleX(0.87);">Allocate Memory</div>
<svg style="left:81px;top:391.5px" width="15" height="16" viewBox="0 0 15 16"><rect x="0.9" y="0.6" width="12.6" height="6.6" fill="#1e3a1e" stroke="#3ec03e" stroke-width="1.1"/><rect x="2.4" y="2" width="2.4" height="2.2" fill="#4a3a48"/><rect x="6.1" y="2" width="2.4" height="2.2" fill="#4a3a48"/><rect x="9.8" y="2" width="2.4" height="2.2" fill="#4a3a48"/><path d="M2.2 5v1.8M4.2 5v1.8M6.2 5v1.8M8.2 5v1.8M10.2 5v1.8M12.2 5v1.8" stroke="#d0c070" stroke-width="0.8"/><path d="M10.5 9v6.5M7.25 12.25h6.5" stroke="#20c020" stroke-width="2"/></svg>
<div class="s" style="left:102.5px;top:420.15px;color:#e2e2e2;transform:scaleX(0.87);">Go to</div>
<svg style="left:290px;top:422.1px" width="5" height="7"><path d="M0.3 0 L4.8 3.5 L0.3 7 Z" fill="#d8d8d8"/></svg>
<svg style="left:80.5px;top:417.5px" width="16" height="14" viewBox="0 0 16 14"><path d="M1 8 Q1.5 5 4 4.5 L11 4.5 Q13.5 5 14.5 8 L14.5 11 L1 11 Z" fill="#a8c8f0" stroke="#3a68b0" stroke-width="0.7"/><path d="M4 5 L5 3 L9.5 3 L10.5 5 Z" fill="#d8e8f8" stroke="#3a68b0" stroke-width="0.5"/><rect x="1.2" y="8.5" width="2" height="1.2" fill="#f0a020"/><rect x="12.3" y="8.5" width="2" height="1.2" fill="#f0a020"/><rect x="2.5" y="11" width="2" height="2" fill="#222"/><rect x="11" y="11" width="2" height="2" fill="#222"/><path d="M7 2.5 L12.5 2.5" stroke="#40a8f0" stroke-width="1.3"/><path d="M12 0 L15 2.5 L12 5Z" fill="#40a8f0"/></svg>
<div class="s" style="left:102.5px;top:446.50px;color:#e2e2e2;transform:scaleX(0.87);">Hex</div>
<svg style="left:290px;top:448.5px" width="5" height="7"><path d="M0.3 0 L4.8 3.5 L0.3 7 Z" fill="#d8d8d8"/></svg>
<svg style="left:81px;top:444px" width="14" height="14" viewBox="0 0 14 14"><circle cx="7" cy="6.8" r="6.4" fill="#ecb830" stroke="#a87808" stroke-width="0.6"/><circle cx="6" cy="4.5" r="3.5" fill="#f8dc70" opacity="0.6"/><path d="M1.6 4.6 h10.8" stroke="#3a3020" stroke-width="0.7"/><ellipse cx="4.4" cy="5.6" rx="2.4" ry="1.3" fill="#2a2a30"/><ellipse cx="9.6" cy="5.6" rx="2.4" ry="1.3" fill="#2a2a30"/><path d="M4.4 9.8 Q6.5 11 9 10" stroke="#6a4a10" stroke-width="0.8" fill="none"/></svg>
<div class="s" style="left:102.5px;top:472.04px;color:#e2e2e2;transform:scaleX(0.87);">Text</div>
<svg style="left:290px;top:474.0px" width="5" height="7"><path d="M0.3 0 L4.8 3.5 L0.3 7 Z" fill="#d8d8d8"/></svg>
<svg style="left:82.5px;top:472px" width="12" height="9" viewBox="0 0 12 9"><path d="M0.5 8 L3.5 0.5 L4.5 0.5 L7.5 8 M2 5.2 h4" stroke="#d0d0d0" stroke-width="1.2" fill="none"/><path d="M8.5 4.5 h2.5 v1.5 h-2.5 v1.5 h2.5" stroke="#c8c8c8" stroke-width="0.9" fill="none"/></svg>
<div class="s" style="left:102.5px;top:497.58px;color:#e2e2e2;transform:scaleX(0.87);">Integer</div>
<svg style="left:290px;top:499.6px" width="5" height="7"><path d="M0.3 0 L4.8 3.5 L0.3 7 Z" fill="#d8d8d8"/></svg>
<svg style="left:83px;top:497px" width="11" height="9" viewBox="0 0 11 9"><rect x="0" y="0" width="10.5" height="8.5" rx="1" fill="#d82828"/><path d="M2.6 1.8 L1.5 5 h2.3 M3.3 3.5 v3.5 M5.8 2.7 q0.8 -1 1.8 -0.6 q1 0.6 0 2 l-1.8 2.5 h2.4" stroke="#fff" stroke-width="0.9" fill="none"/></svg>
<div class="s" style="left:102.5px;top:523.12px;color:#e2e2e2;transform:scaleX(0.87);">Float</div>
<svg style="left:290px;top:525.1px" width="5" height="7"><path d="M0.3 0 L4.8 3.5 L0.3 7 Z" fill="#d8d8d8"/></svg>
<svg style="left:83.5px;top:520px" width="9" height="15" viewBox="0 0 9 15"><path d="M4.5 0.5 Q5.5 4 7.5 8 Q9 13.8 4.5 14 Q0 13.8 1.5 8 Q3.5 4 4.5 0.5Z" fill="#5a9ad8" stroke="#2a5a98" stroke-width="0.5"/><path d="M3 10 Q3 12 4.5 12.3" stroke="#c8e0f8" stroke-width="0.9" fill="none"/></svg>
<div class="s" style="left:102.5px;top:548.66px;color:#e2e2e2;transform:scaleX(0.87);">Address</div>
<svg style="left:82.5px;top:546.5px" width="12" height="14" viewBox="0 0 12 14"><rect x="0.5" y="0.5" width="10" height="13" rx="1" fill="#5a8ad8" stroke="#2a4a8a" stroke-width="0.7"/><path d="M10.5 2v1.5M10.5 5v1.5M10.5 8v1.5M10.5 11v1.5" stroke="#fff" stroke-width="1"/><circle cx="5.5" cy="7" r="2.8" fill="none" stroke="#c8dcf8" stroke-width="0.9"/><circle cx="5.8" cy="7" r="1" fill="none" stroke="#c8dcf8" stroke-width="0.7"/></svg>
<div class="s" style="left:102.5px;top:574.20px;color:#e2e2e2;transform:scaleX(0.87);">Disassembly</div>
<svg style="left:81px;top:571px" width="14" height="14" viewBox="0 0 14 14"><rect x="0.5" y="0.5" width="13" height="13" fill="#2c8a2c" stroke="#1a4a1a" stroke-width="0.8"/><rect x="1.5" y="1.5" width="11" height="11" fill="#3fa33f"/><g fill="#c8c050"><rect x="1.5" y="1.5" width="1" height="1"/><rect x="11.5" y="1.5" width="1" height="1"/><rect x="1.5" y="11.5" width="1" height="1"/><rect x="11.5" y="11.5" width="1" height="1"/></g><rect x="4" y="4" width="6" height="6" fill="#303030" stroke="#151515" stroke-width="0.6"/></svg>
<div style="left:85px;top:437px;width:211px;height:1.5px;background:#5c5c5c"></div>
<div style="left:69.8px;top:534.7px;width:128px;height:36.6px;box-sizing:border-box;border:4px solid #ee3c3c;border-radius:5px"></div>
</body></html>
